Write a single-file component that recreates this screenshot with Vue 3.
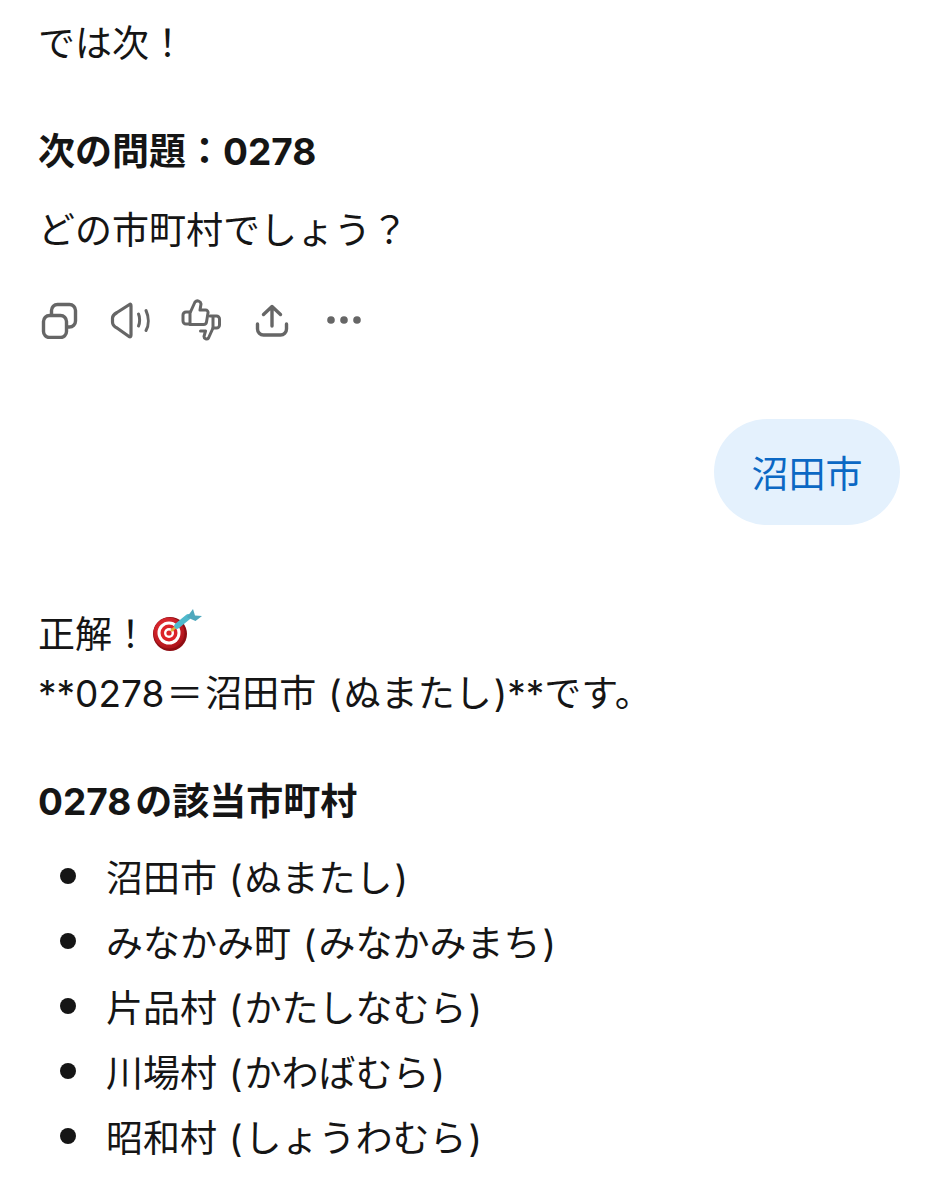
<script setup>
const items = [
  ['沼田市', 'ぬまたし'],
  ['みなかみ町', 'みなかみまち'],
  ['片品村', 'かたしなむら'],
  ['川場村', 'かわばむら'],
  ['昭和村', 'しょうわむら'],
]
</script>

<template>
  <main class="page">
    <p class="line first">では次！</p>
    <h2 class="heading h-q">次の問題：0278</h2>
    <p class="line question">どの市町村でしょう？</p>

    <div class="actions">
      <svg class="icon" width="38" height="38" viewBox="0 0 38 38" fill="none" stroke="#666" stroke-width="3.4" stroke-linejoin="round" stroke-linecap="round">
        <rect x="3.5" y="14.5" width="23" height="22" rx="6" />
        <path d="M11.500 13V9.500a6 6 0 0 1 6-6h12a6 6 0 0 1 6 6V20a6 6 0 0 1-6 6h-2" />
      </svg>
      <svg class="icon" width="42" height="38" viewBox="0 0 42 38" fill="none" stroke="#666" stroke-linecap="round" stroke-linejoin="round">
        <path stroke-width="3.2" d="M19.500 3.500 7 11.500Q2.500 14 2.500 17v4q0 4 4.500 6l12 8.500q2 1 2-1.500V5q0-2.500-1.500-1.500Z" />
        <path stroke-width="3" d="M28.500 13c1.500 3 1.500 9 0 12M36 9.500c3 6.500 3 14.500 0 20" />
      </svg>
      <svg class="icon" width="42" height="42" viewBox="0 0 42 42" fill="none" stroke="#666" stroke-width="3" stroke-linecap="round" stroke-linejoin="round">
        <path d="M9 13H5a3 3 0 0 0-3 3v6a3 3 0 0 0 3 3h4" />
        <path d="M9 14 14 3a3.500 3.500 0 0 1 6 2l-1 6h5.500a2.500 2.500 0 0 1 2.500 3l-1.500 9a3 3 0 0 1-3 2.500H9Z" />
        <path d="M29 17h6.500a3 3 0 0 1 3 3v6a3 3 0 0 1-3 3H32l-4.500 10a2.500 2.500 0 0 1-4.500-1.500l1.500-5.500h-5" />
        <path d="M32 18v11" />
      </svg>
      <svg class="icon" width="34" height="42" viewBox="0 -4 34 42" fill="none" stroke="#666" stroke-width="3.4" stroke-linecap="round" stroke-linejoin="round">
        <path d="M17 23V3.500M8.500 11.500l8.500-8 8.500 8" />
        <path d="M2.500 21v5a6 6 0 0 0 6 6h17a6 6 0 0 0 6-6v-5" />
      </svg>
      <svg class="icon" width="34" height="10" viewBox="0 0 34 10" fill="#666">
        <circle cx="4" cy="5" r="3.8" />
        <circle cx="17" cy="5" r="3.8" />
        <circle cx="30" cy="5" r="3.8" />
      </svg>
    </div>

    <div class="user-row">
      <div class="bubble">沼田市</div>
    </div>

    <div class="answer">
      <p class="answer-top">正解！<svg class="dart" width="52" height="46" viewBox="0 0 52 46">
        <defs>
          <radialGradient id="board" cx="0.4" cy="0.35" r="0.75">
            <stop offset="0" stop-color="#f0333a" />
            <stop offset="1" stop-color="#a50f16" />
          </radialGradient>
        </defs>
        <circle cx="19" cy="26" r="17" fill="#8f0d13" />
        <circle cx="18" cy="25" r="15.500" fill="url(#board)" />
        <circle cx="18" cy="25" r="11.500" fill="#fff" />
        <circle cx="18" cy="25" r="8.500" fill="#dc2228" />
        <circle cx="18" cy="25" r="5" fill="#fff" />
        <circle cx="18" cy="25" r="2.600" fill="#dc2228" />
        <path d="M20 23 27 17" stroke="#e0b13a" stroke-width="2.500" />
        <path d="M26 18 37 9" stroke="#4fb9cc" stroke-width="5.500" stroke-linecap="round" />
        <path d="M36 9 42 1l2 6.500 7 .5-6.500 5-8-3.500Z" fill="#4ea8bd" />
      </svg></p>
      <p class="answer-bottom">**0278<span class="eq">＝</span>沼田市<span class="paren-open">(</span>ぬまたし<span class="paren-close">)</span>**です。</p>
    </div>

    <h2 class="heading h-list">0278<span class="no">の該当市町村</span></h2>

    <ul class="list">
      <li v-for="item in items" :key="item[0]" class="item">
        <span class="dot"></span>
        <span class="label">{{ item[0] }}<span class="paren-open">(</span>{{ item[1] }}<span class="paren-close">)</span></span>
      </li>
    </ul>
  </main>
</template>

<style>
html, body { background: #fff; }
</style>

<style scoped>
.page {
  width: 938px;
  height: 1200px;
  box-sizing: border-box;
  overflow: hidden;
  padding: 18px 38px 0 38px;
  font-family: "Inter", "Noto Sans CJK JP", sans-serif;
  font-size: 37px;
  color: #151515;
  background: #fff;
}
.line { margin: 0; line-height: 52px; }
.heading { margin: 0; font-size: 37px; font-weight: 700; line-height: 52px; }
.h-q { margin-top: 56px; }
.question { margin-top: 27px; }
.actions { display: flex; align-items: center; height: 46px; margin-top: 40px; }
.icon { display: block; flex: none; }
.actions .icon:nth-child(1) { margin-left: 2px; }
.actions .icon:nth-child(2) { margin-left: 32px; }
.actions .icon:nth-child(3) { margin-left: 29px; }
.actions .icon:nth-child(4) { margin-left: 32px; }
.actions .icon:nth-child(5) { margin-left: 38px; }
.user-row { display: flex; justify-content: flex-end; margin-top: 76px; }
.bubble {
  width: 186px;
  height: 106px;
  display: flex;
  align-items: center;
  justify-content: center;
  border-radius: 53px;
  background: #e4f1fd;
  color: #0b68c4;
}
.answer { margin-top: 83px; }
.answer-top, .answer-bottom { margin: 0; line-height: 57px; height: 57px; white-space: nowrap; }
.answer-top { display: flex; align-items: center; margin-top: -2px; }
.answer-bottom { margin-top: 2px; }
.dart { margin-left: 2px; margin-top: -8px; flex: none; }
.eq { margin: 0 2px; }
.paren-open { margin-left: 12px; margin-right: 2px; }
.paren-close { margin-left: 2px; }
.no { margin-left: 4px; }
.h-list { margin-top: 54px; }
.list { list-style: none; margin: 15px 0 0; padding: 0; }
.item { display: flex; align-items: center; height: 65px; }
.dot { width: 16px; height: 16px; border-radius: 50%; background: #151515; margin-left: 22px; flex: none; }
.label { margin-left: 30px; white-space: nowrap; }
</style>
